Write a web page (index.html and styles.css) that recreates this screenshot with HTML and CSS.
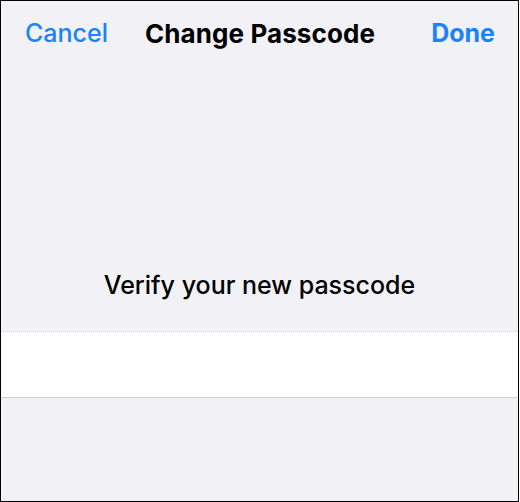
FILE: index.html
```html
<!DOCTYPE html>
<html lang="en">
  <head>
    <meta charset="UTF-8" />
    <meta name="viewport" content="width=device-width, initial-scale=1.0" />
    <title>Change Passcode</title>
    <link rel="stylesheet" href="styles.css">
  </head>
  <body>
    <div class="screen">
      <!-- Navigation bar -->
      <header class="nav-bar">
        <a class="nav-btn" href="#">Cancel</a>
        <h1 class="nav-title">Change Passcode</h1>
        <a class="nav-btn nav-btn-done" href="#">Done</a>
      </header>
      <div class="prompt">Verify your new passcode</div>
      <div class="code-field"></div>
    </div>
  </body>
</html>
```

FILE: styles.css
```css
html, body {
  margin: 0;
  padding: 0;
  background-color: #fff;
}
body {
  font-family: Inter, "Noto Sans", sans-serif;
  color: #000;
}
.screen {
  width: 517px;
  height: 500px;
  border: 1px solid #000;
  background-color: #f2f1f6;
  display: flex;
  flex-direction: column;
}
/* Nav bar */
.nav-bar {
  display: grid;
  grid-template-columns: 1fr auto 1fr;
  align-items: center;
  height: 64px;
  padding: 0 23px 0 24px;
}
.nav-btn {
  color: #1a82fb;
  text-decoration: none;
  font-size: 25px;
  font-weight: 500;
  justify-self: start;
}
.nav-btn-done {
  font-weight: 700;
  justify-self: end;
}
.nav-title {
  margin: 0;
  font-size: 26px;
  font-weight: 700;
  letter-spacing: 0.1px;
}
.prompt {
  margin-top: 205px;
  text-align: center;
  font-size: 25px;
  font-weight: 500;
  line-height: 30px;
}
.code-field {
  margin-top: 31px;
  height: 65px;
  background-color: #fff;
  border-top: 1px dotted #cfcfd4;
  border-bottom: 1px solid #d0d0d4;
}
```
